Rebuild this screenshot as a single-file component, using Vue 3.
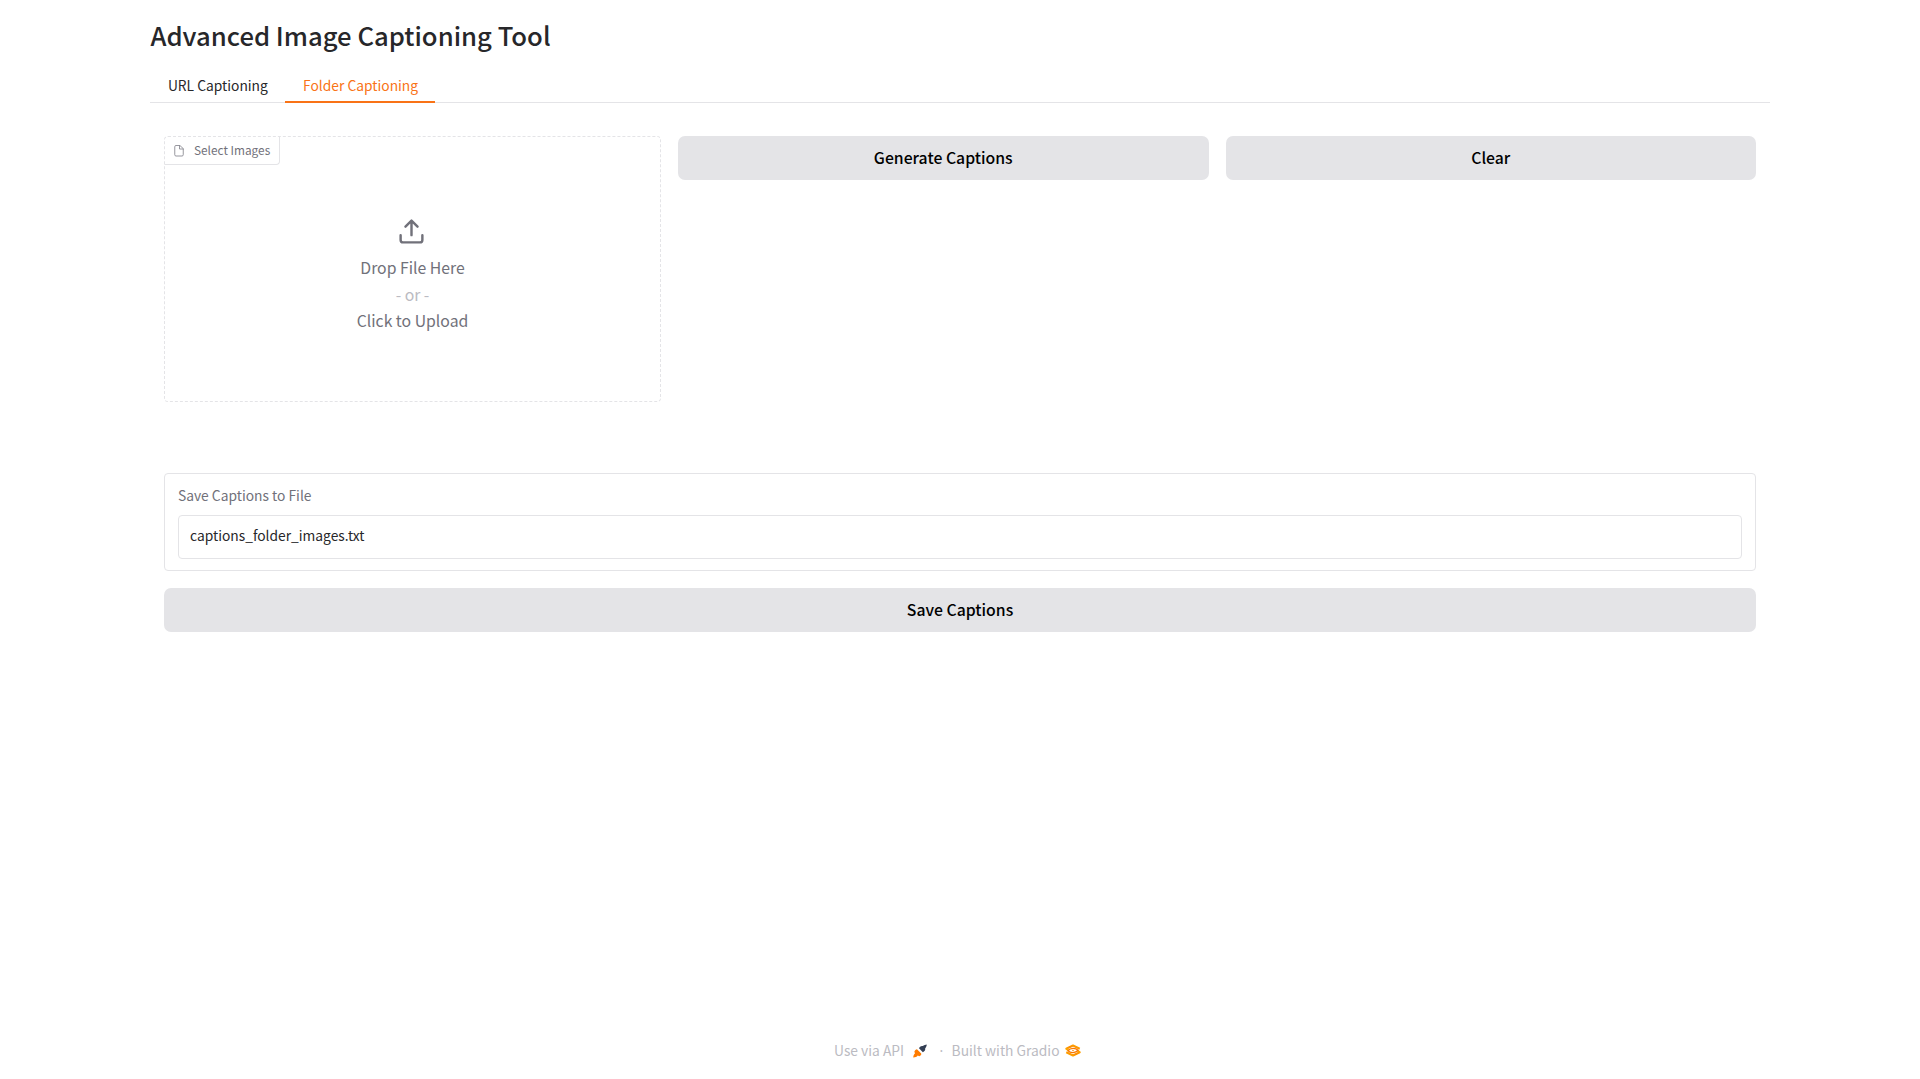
<script setup>
const tabs = [
  { label: 'URL Captioning', active: false },
  { label: 'Folder Captioning', active: true },
]
</script>

<template>
  <main class="page">
    <h1>Advanced Image Captioning Tool</h1>
    <nav class="tabs">
      <button v-for="t in tabs" :key="t.label" :class="['tab', { active: t.active }]">{{ t.label }}</button>
    </nav>
    <section class="panel">
      <div class="row">
        <div class="upload">
          <div class="badge">
            <svg width="12" height="13" viewBox="0 0 24 26" fill="none" stroke="currentColor" stroke-width="1.8" stroke-linecap="round" stroke-linejoin="round"><path d="M13 3H6a2.500 2.500 0 0 0-2.500 2.500v16A2.500 2.500 0 0 0 6 24h12a2.500 2.500 0 0 0 2.500-2.500V10z" /><path d="M13 3v7h7.500" /></svg>
            <span>Select Images</span>
          </div>
          <div class="drop">
            <svg width="29" height="29" viewBox="0 0 24 24" fill="none" stroke="currentColor" stroke-width="2" stroke-linecap="round" stroke-linejoin="round"><path d="M21 15v4a2 2 0 0 1-2 2H5a2 2 0 0 1-2-2v-4" /><path d="M17 8l-5-5-5 5M12 3v12" /></svg>
            <span>Drop File Here</span>
            <span class="or">- or -</span>
            <span>Click to Upload</span>
          </div>
        </div>
        <button class="btn">Generate Captions</button>
        <button class="btn">Clear</button>
      </div>
      <div class="field">
        <label for="file">Save Captions to File</label>
        <input id="file" type="text" value="captions_folder_images.txt" />
      </div>
      <button class="btn save">Save Captions</button>
    </section>
    <footer>
      <span class="api">Use via API</span>
      <svg class="rocket" width="14" height="14" viewBox="0 0 28 28"><path fill="#ff7c00" d="M8 10.500l8.500 8.500c.8 2-1 4.500-4 5.500l-3-1.500c-2 3-6 4-9 3.800.2-3 1-6.500 3.500-8.500l-1.300-2.800c1-3 3-5 5.300-5z" /><path fill="#343f54" d="M12 8.500c1-3 4-5.300 7.500-4.500C22 2 25 1 27.500.8c0 2.700-1.200 5.500-3.200 8 .9 3.500-1.600 5.700-4.600 7.700z" /></svg>
      <span class="dot">·</span>
      <span class="built">Built with Gradio</span>
      <svg class="gradio" width="16" height="13" viewBox="0 0 32 26" fill="none" stroke-linejoin="round">
        <defs>
          <linearGradient id="amber" x1="0" y1="1" x2="1" y2="0">
            <stop offset="0" stop-color="#ffb000" />
            <stop offset=".5" stop-color="#fb8c00" />
            <stop offset="1" stop-color="#ffa800" />
          </linearGradient>
        </defs>
        <path stroke="url(#amber)" stroke-width="4" d="M7 13L2.500 9.500 16 3l13.500 6.500" />
        <path stroke="url(#amber)" stroke-width="4" d="M25 13l4.500 3.500L16 23 2.500 16.500" />
        <path stroke="#f97700" stroke-width="2.400" d="M6 13.500c5-6 15-6 20-1-5 6-15 6-20 1z" />
        <circle cx="16" cy="13" r="1.600" fill="#f98a00" />
      </svg>
    </footer>
  </main>
</template>

<style>
body {
  margin: 0;
  background: #fff;
}
</style>

<style scoped>
* {
  box-sizing: border-box;
}
.page {
  width: 1620px;
  height: 1079px;
  margin: 0 auto;
  display: flex;
  flex-direction: column;
  font-family: "Noto Sans CJK SC", "Noto Sans", sans-serif;
  color: #27272a;
}
button,
input {
  font-family: inherit;
  margin: 0;
}
h1 {
  margin: 15px 0 0;
  padding-left: 0.5px;
  height: 40px;
  line-height: 40px;
  font-size: 25.66px;
  font-weight: 500;
}
.tabs {
  margin-top: 13px;
  height: 35px;
  display: flex;
  border-bottom: 1px solid #e4e4e7;
}
.tab {
  border: 0;
  background: none;
  padding: 0 17.4px 0 17.9px;
  height: 35px;
  line-height: 32px;
  font-size: 13.8px;
  color: #27272a;
  border-bottom: 2px solid transparent;
}
.tab.active {
  color: #f97316;
  border-color: #f97316;
}
.panel {
  padding: 33px 14px 0;
}
.row {
  display: flex;
  align-items: flex-start;
  gap: 17px;
}
.upload {
  width: 497px;
  height: 266px;
  flex: none;
  border: 1px dashed #e4e4e7;
  border-radius: 4px;
}
.badge {
  display: flex;
  align-items: center;
  width: 116px;
  height: 29px;
  margin: -1px 0 0 -1px;
  padding-left: 8px;
  gap: 9px;
  border: 1px solid #e4e4e7;
  border-top-color: transparent;
  border-left-color: transparent;
  border-radius: 4px 0 4px 0;
  color: #71717a;
  font-size: 11.84px;
}
.badge span {
  padding-bottom: 2px;
}
.badge svg {
  opacity: 0.8;
}
.drop {
  display: flex;
  flex-direction: column;
  align-items: center;
  padding-top: 52px;
  color: #71717a;
  font-size: 15.79px;
  line-height: 26.5px;
}
.drop svg {
  margin: 0 2.6px 9px 0;
}
.or {
  color: #bbbbc2;
}
.btn {
  flex: 1;
  height: 44px;
  padding: 0 0 2px;
  border: 0;
  border-radius: 7px;
  background: #e4e4e7;
  color: #000;
  font-size: 15.79px;
  font-weight: 500;
}
.field {
  margin-top: 71px;
  height: 98px;
  padding: 10px 13px;
  border: 1px solid #e4e4e7;
  border-radius: 4px;
}
label {
  display: block;
  height: 31px;
  line-height: 23px;
  font-size: 13.8px;
  color: #71717a;
}
input {
  display: block;
  width: 100%;
  height: 44px;
  padding: 0 11px 4px;
  border: 1px solid #e4e4e7;
  border-radius: 4px;
  font-size: 13.8px;
  color: #27272a;
}
.save {
  display: block;
  width: 100%;
  margin-top: 17px;
}
footer {
  margin-top: auto;
  height: 57px;
  display: flex;
  padding-left: 684px;
  line-height: 57px;
  font-size: 13.8px;
  color: #bbbbc2;
}
footer svg {
  margin-top: 22px;
}
.rocket {
  margin-left: 8.5px;
}
.dot {
  width: 4px;
  margin-left: 13px;
  font-family: "Noto Sans", sans-serif;
}
.built {
  margin-left: 8px;
}
.gradio {
  margin-left: 5px;
}
</style>
